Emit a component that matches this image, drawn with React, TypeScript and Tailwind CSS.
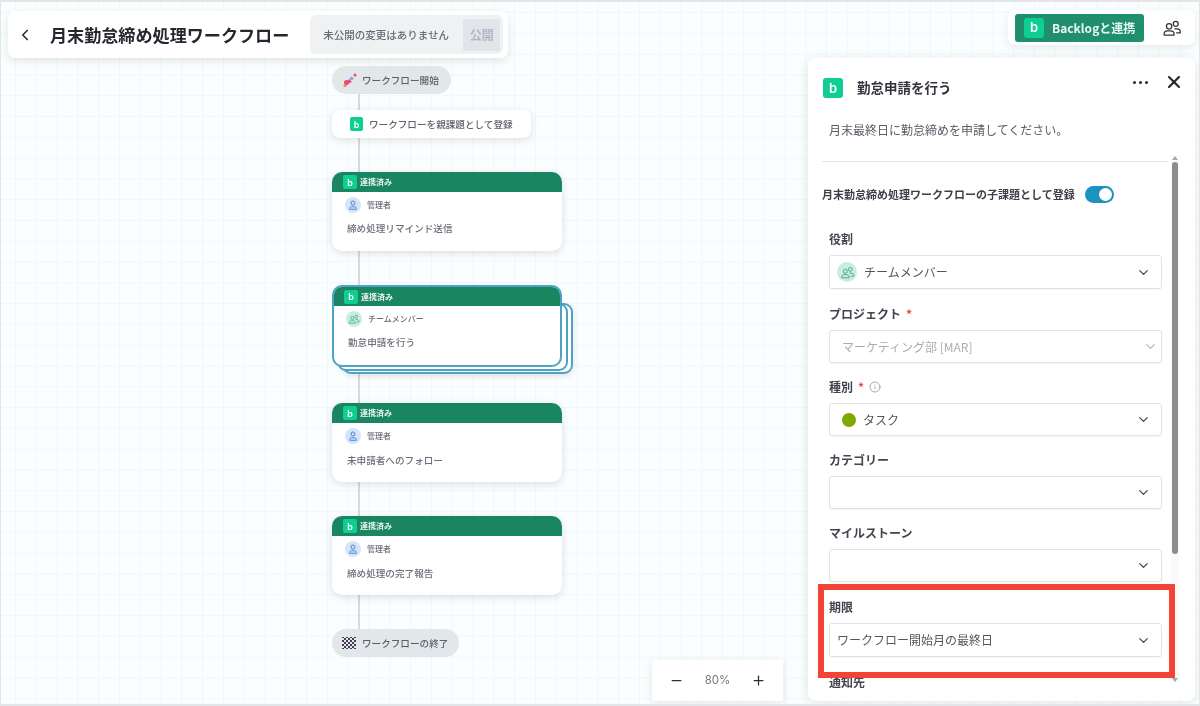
import React from "react";
import { ChevronDown, ChevronLeft, Minus, Plus, X, Info } from "lucide-react";

const JP = "font-['Noto_Sans_CJK_JP','Noto_Sans',sans-serif]";

function BLogo({ size = "w-5 h-5 text-[13px] rounded-[3px]" }: { size?: string }) {
  return (
    <span className={`${size} bg-[#0fce92] text-white font-semibold flex items-center justify-center shrink-0 leading-none font-['Inter',sans-serif]`}>
      b
    </span>
  );
}

function UsersIcon({ className = "", color = "currentColor" }: { className?: string; color?: string }) {
  return (
    <svg viewBox="0 0 24 24" fill="none" stroke={color} strokeWidth="1.5" className={className}>
      <circle cx="8.5" cy="10" r="3.2" />
      <path d="M2.5 20.5v-1c0-2.5 2-4 4-4h4c2 0 4 1.500 4 4v1z" strokeLinejoin="round" />
      <circle cx="16.5" cy="7" r="3" />
      <path d="M15 13h3c2 0 4 1.500 4 4v.800h-5" strokeLinejoin="round" />
    </svg>
  );
}

function UserIcon({ className = "" }: { className?: string }) {
  return (
    <svg viewBox="0 0 24 24" fill="none" stroke="#3f78c4" strokeWidth="1.800" className={className}>
      <circle cx="12" cy="8" r="4" />
      <path d="M5.500 20.500v-1.500c0-2 1.500-3.500 3.500-3.500h6c2 0 3.500 1.500 3.500 3.500v1.500z" strokeLinejoin="round" />
    </svg>
  );
}

function Card({ y, role, title, team, selected, low }: { y: string; role: string; title: string; team?: boolean; selected?: boolean; low?: boolean }) {
  return (
    <div className={`absolute left-[331px] w-[230px] ${y} ${selected ? "h-[82px]" : "h-[79px]"}`}>
      {selected && (
        <>
          <div className="absolute left-[10px] top-[18px] w-[231px] h-[71px] rounded-[9px] border-2 border-[#4ea3c4] bg-white shadow-[0_2px_6px_rgba(0,0,0,0.12)]" />
          <div className="absolute left-[5px] top-[18px] w-[231px] h-[68px] rounded-[9px] border-2 border-[#4ea3c4] bg-white" />
        </>
      )}
      <div className={`relative h-full bg-white rounded-[10px] overflow-hidden flex flex-col ${selected ? "border-2 border-[#4ea3c4]" : "shadow-[0_2px_8px_rgba(0,0,0,0.13)]"}`}>
        <div className={`shrink-0 bg-[#1a8561] flex items-center gap-[3px] ${selected ? "h-[19px] pl-[10px]" : "h-[20px] pl-[11px]"}`}>
          <BLogo size="w-[14px] h-[14px] text-[9px] rounded-[2px]" />
          <span className="text-[8px] font-bold text-[#e9f5f1] leading-none">連携済み</span>
        </div>
        <div className={`flex items-center gap-[6px] mt-[5px] ${selected ? "pl-[12px]" : "pl-[13px]"}`}>
          <span className={`w-4 h-4 rounded-full flex items-center justify-center ${team ? "bg-[#c9eedd]" : "bg-[#d5e4fb]"}`}>
            {team ? <UsersIcon className="w-3 h-3" color="#46a184" /> : <UserIcon className="w-3 h-3" />}
          </span>
          <span className="text-[8px] font-medium text-[#6d6d7a] leading-none">{role}</span>
        </div>
        <div className={`text-[9.600px] font-medium leading-[14px] text-[#6d6d7a] ${selected ? "pl-[14px]" : "pl-[15px]"} ${low ? "mt-[9px]" : "mt-[8px]"}`}>{title}</div>
      </div>
    </div>
  );
}

function Field({ label, req, info, children, muted, tall, spaced, noSelect }: { label: string; req?: boolean; info?: boolean; children?: React.ReactNode; muted?: boolean; tall?: boolean; spaced?: boolean; noSelect?: boolean }) {
  return (
    <div className={spaced ? "mb-[15px]" : "mb-[14px]"}>
      <div className="h-[20px] flex items-center gap-[5px] text-[12px] font-bold text-[#44444e] leading-none mb-[6px]">
        <span>{label}</span>
        {req && <span className="text-[#e5484d] text-[12px]">*</span>}
        {info && <Info className="w-[12px] h-[12px] text-[#8a8a94]" strokeWidth={1.500} />}
      </div>
      {!noSelect && (
        <div className={`w-[333px] bg-white border border-[#dfe2e6] rounded-[3px] flex items-center pl-[7px] shadow-[0_1px_1px_rgba(0,0,0,0.04)] ${tall ? "h-[34px]" : "h-[33px]"} ${muted ? "pr-[3px]" : "pr-[10px]"}`}>
          <div className="flex-1 min-w-0 flex items-center text-[12px] text-[#55555f]">{children}</div>
          <ChevronDown className={`w-[15px] h-[15px] ${muted ? "text-[#b4b8bd]" : "text-[#44444c]"}`} strokeWidth={2} />
        </div>
      )}
    </div>
  );
}

export default function App() {
  return (
    <div className={`relative w-[1200px] h-[706px] overflow-hidden blur-[0.4px] bg-[#fbfeff] border-t-2 border-b-2 border-x border-[#e3e5e7] ${JP} bg-[linear-gradient(#eef8fb_1px,transparent_1px),linear-gradient(90deg,#eef8fb_1px,transparent_1px)] bg-[size:20.800px_20.800px] bg-[position:14px_10px]`}>
      {/* connector */}
      <div className="absolute left-[357px] top-[92px] w-[2px] h-[536px] bg-[#d6dadd]" />

      {/* title bar */}
      <div className="absolute left-[7px] top-[9px] w-[500px] h-[47px] bg-white rounded-[7px] shadow-[0_3px_10px_rgba(0,0,0,0.10)] flex items-center">
        <ChevronLeft className="w-[18px] h-[18px] ml-[8px] text-[#2b2b33]" strokeWidth={2.200} />
        <span className="ml-[16px] text-[17.100px] font-bold text-[#26262e] leading-none whitespace-nowrap">月末勤怠締め処理ワークフロー</span>
        <div className="ml-[21px] w-[193px] h-[39px] bg-[#eff1f3] rounded-[6px] flex items-center pl-[13px] pr-[3px]">
          <span className="text-[10.500px] font-medium text-[#6a6a76] whitespace-nowrap">未公開の変更はありません</span>
          <span className="ml-auto w-[37px] h-[32px] bg-[#e1e4e8] rounded-[2px] flex items-center justify-center text-[12px] font-bold text-[#b5b5c6]">公開</span>
        </div>
      </div>

      {/* top right */}
      <div className="absolute left-[1007px] top-[8px] w-[187px] h-[35px] bg-white rounded-[7px] shadow-[0_3px_10px_rgba(0,0,0,0.08)] flex items-center pl-[7px]">
        <div className="w-[129px] h-[28px] bg-[#1f8f6e] rounded-[3px] flex items-center pl-[9px] gap-[8px]">
          <BLogo size="w-[20px] h-[20px] text-[13px] rounded-[3px]" />
          <span className="text-[12px] font-bold text-[#eaf6f2] whitespace-nowrap">Backlogと連携</span>
        </div>
        <UsersIcon className="w-[20px] h-[20px] ml-[18px] text-[#33333b]" />
      </div>

      {/* start */}
      <div className="absolute left-[331px] top-[64px] w-[119px] h-[28px] bg-[#e2e7ea] rounded-full flex items-center pl-[10px] gap-[4px]">
        <svg viewBox="0 0 16 16" className="w-4 h-4 shrink-0">
          <path d="M3 13 L7 7 L10 10 Z" fill="#e8467c" />
          <circle cx="4.500" cy="10.500" r="2.500" fill="#e8467c" />
          <circle cx="3" cy="13.500" r="1.600" fill="#f08a3c" />
          <circle cx="9.500" cy="6.500" r="1.800" fill="#8aa4dd" />
          <circle cx="13" cy="3" r="1.500" fill="#e8467c" />
        </svg>
        <span className="text-[9.600px] font-medium text-[#5e5e6a] whitespace-nowrap">ワークフロー開始</span>
      </div>

      {/* parent issue */}
      <div className="absolute left-[331px] top-[108px] w-[199px] h-[28px] bg-white rounded-[8px] shadow-[0_2px_8px_rgba(0,0,0,0.12)] flex items-center pl-[18px] gap-[6px]">
        <BLogo size="w-[13px] h-[14px] text-[9px] rounded-[2px]" />
        <span className="text-[9.600px] font-medium text-[#62626e] whitespace-nowrap">ワークフローを親課題として登録</span>
      </div>

      <Card y="top-[170px]" role="管理者" title="締め処理リマインド送信" />
      <Card y="top-[283px]" role="チームメンバー" title="勤怠申請を行う" team selected />
      <Card y="top-[401px]" role="管理者" title="未申請者へのフォロー" low />
      <Card y="top-[514px]" role="管理者" title="締め処理の完了報告" low />

      {/* end */}
      <div className="absolute left-[331px] top-[627px] w-[127px] h-[28px] bg-[#e2e7ea] rounded-full flex items-center pl-[10px] gap-[6px]">
        <svg viewBox="0 0 14 14" className="w-[14px] h-[14px] shrink-0">
          <pattern id="chk" width="4" height="4" patternUnits="userSpaceOnUse">
            <rect width="2" height="2" fill="#4a3b55" />
            <rect x="2" y="2" width="2" height="2" fill="#4a3b55" />
          </pattern>
          <rect x="0" y="1" width="14" height="12" fill="url(#chk)" />
        </svg>
        <span className="text-[9.600px] font-medium text-[#5e5e6a] whitespace-nowrap">ワークフローの終了</span>
      </div>

      {/* zoom */}
      <div className="absolute left-[651px] top-[658px] w-[131px] h-[41px] bg-white rounded-[3px] shadow-[0_2px_8px_rgba(0,0,0,0.10)] flex items-center justify-between px-[17px]">
        <Minus className="w-[15px] h-[15px] text-[#2c2c34]" strokeWidth={2} />
        <span className="text-[11.500px] text-[#77777f] font-['Inter',sans-serif]">80%</span>
        <Plus className="w-[15px] h-[15px] text-[#2c2c34]" strokeWidth={2} />
      </div>

      {/* panel */}
      <div className="absolute left-[807px] top-[56px] w-[387px] h-[643px] bg-white rounded-[8px] shadow-[0_2px_12px_rgba(0,0,0,0.10)] overflow-hidden">
        <div className="flex items-center h-[44px] pt-[16px] pl-[15px]">
          <BLogo size="w-[20px] h-[20px] text-[13px] rounded-[3px]" />
          <span className="ml-[14px] text-[13.500px] font-bold text-[#33333b] leading-none">勤怠申請を行う</span>
        </div>
        <div className="absolute right-[47px] top-[23px] flex gap-[3px]">
          <span className="w-[3px] h-[3px] rounded-full bg-[#2c2c34]" />
          <span className="w-[3px] h-[3px] rounded-full bg-[#2c2c34]" />
          <span className="w-[3px] h-[3px] rounded-full bg-[#2c2c34]" />
        </div>
        <X className="absolute right-[11px] top-[14px] w-[20px] h-[20px] text-[#26262e]" strokeWidth={2.500} />
        <p className="pl-[21px] mt-[19px] text-[12px] text-[#5b5b66] leading-[18px]">月末最終日に勤怠締めを申請してください。</p>
        <div className="ml-[14px] mt-[22px] w-[346px] h-px bg-[#dfe2e6]" />

        <div className="relative h-[534px] overflow-hidden">
          <div className="flex items-center mt-[24px] pl-[14px]">
            <span className="text-[11px] font-bold text-[#3e3e48] whitespace-nowrap leading-none">月末勤怠締め処理ワークフローの子課題として登録</span>
            <span className="ml-[10px] w-[29px] h-[17px] rounded-full bg-[#1b92c0] relative">
              <span className="absolute right-[2px] top-[2px] w-[13px] h-[13px] rounded-full bg-white" />
            </span>
          </div>
          <div className="pl-[21px] mt-[26px]">
            <Field label="役割" tall spaced>
              <span className="w-[20px] h-[20px] rounded-full bg-[#c9eedd] flex items-center justify-center mr-[7px]">
                <UsersIcon className="w-[15px] h-[15px]" color="#46a184" />
              </span>
              チームメンバー
            </Field>
            <Field label="プロジェクト" req muted>
              <span className="pl-[5px] text-[#a9adb3]">マーケティング部 [MAR]</span>
            </Field>
            <Field label="種別" req info>
              <span className="w-[14px] h-[14px] rounded-full bg-[#7fa800] ml-[5px] mr-[7px]" />
              タスク
            </Field>
            <Field label="カテゴリー" />
            <Field label="マイルストーン" spaced />
            <Field label="期限" tall spaced>ワークフロー開始月の最終日</Field>
            <Field label="通知先" noSelect />
          </div>
        </div>

        {/* scrollbar */}
        <div className="absolute right-[16px] top-[97px] w-[8px] h-[527px] bg-[#fafafa]">
          <div className="mx-auto w-0 h-0 mt-[1px] border-l-[3px] border-r-[3px] border-b-[4px] border-transparent border-b-[#a8a8a8]" />
          <div className="mt-[2px] h-[392px] mx-[1px] rounded-full bg-[#8d8d8d]" />
          <div className="absolute bottom-0 left-[1px] w-0 h-0 border-l-[3px] border-r-[3px] border-t-[4px] border-transparent border-t-[#a8a8a8]" />
        </div>
      </div>

      {/* red highlight */}
      <div className="absolute left-[817px] top-[582px] w-[357px] h-[94px] border-[6px] border-[#f44336] pointer-events-none" />
    </div>
  );
}
